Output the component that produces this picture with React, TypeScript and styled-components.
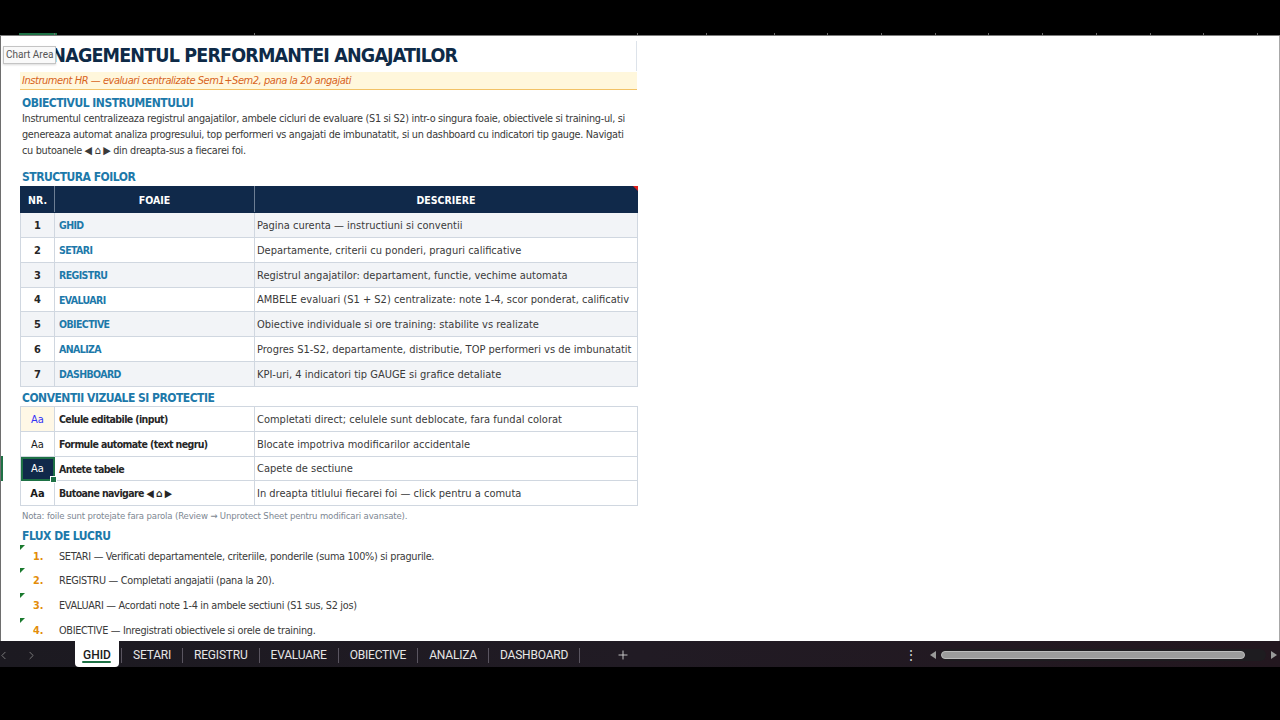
import React from "react";
import styled, { createGlobalStyle } from "styled-components";
import { ChevronLeft, ChevronRight, Plus } from "lucide-react";

const FONT = `"Liberation Sans Narrow", "Arial Narrow", "DejaVu Sans Condensed", Roboto, sans-serif`;
const UI = `Roboto, "Noto Sans", sans-serif`;

const GlobalStyle = createGlobalStyle`
  html, body { margin: 0; padding: 0; background: #000; overflow: hidden; }
  * { box-sizing: border-box; }
`;

const Screen = styled.div`
  width: 1280px;
  height: 720px;
  display: flex;
  flex-direction: column;
  background: #000;
`;

const TopBand = styled.div`
  height: 36px;
  flex: none;
  display: flex;
  align-items: flex-end;
`;

const Sheet = styled.div`
  height: 605px;
  flex: none;
  background: #fff;
  border-left: 1px solid #6e6e6e;
  border-right: 1px solid #a8a8a8;
  position: relative;
  overflow: hidden;
  font-family: ${FONT};
  color: #3a3a3a;
`;

const RowMark = styled.div<{ $top: number; $h: number }>`
  position: absolute;
  left: 0;
  top: ${(p) => p.$top}px;
  width: 2px;
  height: ${(p) => p.$h}px;
  background: #1e7145;
`;

const Content = styled.div`
  margin-left: 19px;
  width: 617px;
  display: flex;
  flex-direction: column;
`;

const TitleRow = styled.div`
  margin-top: 5px;
  height: 30px;
  line-height: 30px;
  padding-left: 2px;
  font-size: 19.5px;
  letter-spacing: -0.85px;
  font-weight: 700;
  color: #0e2a47;
  border-right: 1px solid #dde3ea;
  white-space: nowrap;
`;

const Tooltip = styled.div`
  position: absolute;
  left: 2px;
  top: 10px;
  height: 18px;
  padding: 0 2px;
  line-height: 16px;
  background: #f9f9f9;
  border: 1px solid #c4c4c4;
  box-shadow: 0 1px 2px rgba(0, 0, 0, 0.15);
  font-family: ${UI};
  font-size: 10px;
  color: #555;
  white-space: nowrap;
`;

const Subtitle = styled.div`
  margin-top: 1px;
  height: 18px;
  line-height: 17px;
  padding-left: 2px;
  background: #fff7dc;
  border-bottom: 1px solid #f2c266;
  font-size: 11px;
  letter-spacing: -0.45px;
  font-style: italic;
  color: #d8641c;
  white-space: nowrap;
`;

const SectionHead = styled.div<{ $mt: number; $h: number }>`
  margin-top: ${(p) => p.$mt}px;
  height: ${(p) => p.$h}px;
  line-height: ${(p) => p.$h}px;
  padding-left: 2px;
  font-size: 12px;
  letter-spacing: -0.5px;
  font-weight: 700;
  color: #1d79aa;
  white-space: nowrap;
`;

const Paragraph = styled.div`
  padding-left: 2px;
  font-size: 10.8px;
  letter-spacing: -0.3px;
  line-height: 16px;
  color: #3a3a3a;
`;

const Line = styled.div`
  height: 16px;
  white-space: nowrap;
`;

const Table = styled.table`
  border-collapse: collapse;
  table-layout: fixed;
  width: 617px;
  font-size: 11px;
`;

const Th = styled.th<{ $last?: boolean }>`
  height: 26px;
  padding: 0;
  background: #10294a;
  color: #fff;
  font-size: 10.5px;
  font-weight: 700;
  text-align: center;
  border: 1px solid #10294a;
  border-right: 1px solid ${(p) => (p.$last ? "#10294a" : "#6d7e94")};
  position: relative;
`;

const RedMark = styled.span`
  position: absolute;
  right: -1px;
  top: -1px;
  width: 0;
  height: 0;
  border-top: 5px solid #e0201b;
  border-left: 5px solid transparent;
`;

const Tr = styled.tr<{ $h: number; $alt?: boolean }>`
  height: ${(p) => p.$h}px;
  background: ${(p) => (p.$alt ? "#f2f4f7" : "#fff")};
`;

type CellKind = "num" | "name" | "desc" | "label" | "sample";

const Td = styled.td<{ $kind: CellKind; $bg?: string; $color?: string; $bold?: boolean; $selected?: boolean }>`
  padding: 0 ${(p) => (p.$kind === "desc" ? "2px" : p.$kind === "name" || p.$kind === "label" ? "4px" : "0")};
  border: 1px solid #d0d7e0;
  white-space: nowrap;
  overflow: visible;
  position: relative;
  text-align: ${(p) => (p.$kind === "num" || p.$kind === "sample" ? "center" : "left")};
  font-size: ${(p) => (p.$kind === "name" || p.$kind === "label" ? "10.5px" : "11px")};
  letter-spacing: ${(p) => (p.$kind === "name" || p.$kind === "label" ? "-0.6px" : "0")};
  font-weight: ${(p) => (p.$kind === "num" || p.$kind === "name" || p.$kind === "label" || p.$bold ? 700 : 400)};
  color: ${(p) =>
    p.$color ?? (p.$kind === "name" ? "#1d79aa" : p.$kind === "num" || p.$kind === "label" ? "#262626" : "#3a3a3a")};
  background: ${(p) => p.$bg ?? "transparent"};
  ${(p) =>
    p.$selected
      ? `outline: 2px solid #1e7145; outline-offset: -2px;
         &::after { content: ""; position: absolute; right: -3px; bottom: -3px; width: 5px; height: 5px;
           background: #1e7145; border: 1px solid #fff; }`
      : ""}
`;

const Note = styled.div`
  margin-top: 1px;
  height: 17px;
  line-height: 17px;
  padding-left: 2px;
  font-size: 9.5px;
  letter-spacing: -0.15px;
  color: #7d8792;
  white-space: nowrap;
`;

const FlowRow = styled.div<{ $h: number }>`
  height: ${(p) => p.$h}px;
  display: flex;
  align-items: center;
  position: relative;
  font-size: 10.8px;
  white-space: nowrap;
  &::before {
    content: "";
    position: absolute;
    left: 0;
    top: 0;
    width: 0;
    height: 0;
    border-top: 5px solid #1a7a2e;
    border-right: 5px solid transparent;
  }
`;

const FlowNum = styled.span`
  width: 39px;
  padding-left: 13px;
  font-weight: 700;
  color: #e38d0a;
`;

const FlowText = styled.span`
  color: #3a3a3a;
  letter-spacing: -0.3px;
`;

const TabBar = styled.div`
  height: 26px;
  flex: none;
  display: flex;
  align-items: stretch;
  background: linear-gradient(90deg, #1c1a21 0%, #211b24 50%, #23171f 100%);
  font-family: ${UI};
  font-size: 12px;
  color: #e6e6e6;
`;

const NavArrows = styled.div`
  width: 75px;
  display: flex;
  align-items: center;
  gap: 15px;
  color: #8d8d8d;
  padding-top: 2px;
`;

const ActiveTab = styled.div`
  width: 44px;
  margin-right: 2px;
  padding-top: 2px;
  background: #fff;
  border-radius: 0 0 4px 4px;
  color: #1b1b1b;
  font-weight: 500;
  display: flex;
  align-items: center;
  justify-content: center;
  position: relative;
  &::after {
    content: "";
    position: absolute;
    left: 7px;
    right: 8px;
    bottom: 4px;
    height: 2px;
    background: #1e7145;
    border-radius: 1px;
  }
`;

const Sep = styled.div`
  width: 1px;
  align-self: center;
  height: 15px;
  margin-top: 2px;
  background: #5a5560;
`;

const Tab = styled.div`
  padding: 2px 11px 0;
  display: flex;
  align-items: center;
  letter-spacing: -0.2px;
`;

const AddTab = styled.div`
  width: 86px;
  padding-top: 2px;
  display: flex;
  align-items: center;
  justify-content: center;
  color: #d8d8d8;
`;

const Spacer = styled.div`
  flex: 1;
`;

const Kebab = styled.div`
  width: 12px;
  margin-right: 8px;
  padding-top: 2px;
  display: flex;
  align-items: center;
  justify-content: center;
  color: #d0d0d0;
  font-size: 14px;
`;

const ScrollArea = styled.div`
  width: 355px;
  display: flex;
  align-items: center;
  padding: 2px 3px 0 5px;
  gap: 5px;
`;

const Arrow = styled.div<{ $dir: "l" | "r" }>`
  width: 0;
  height: 0;
  border-top: 4px solid transparent;
  border-bottom: 4px solid transparent;
  ${(p) => (p.$dir === "l" ? "border-right: 6px solid #9a9a9a;" : "border-left: 6px solid #9a9a9a;")}
`;

const Track = styled.div`
  flex: 1;
  height: 12px;
  display: flex;
  align-items: center;
  padding-right: 21px;
  background: #1e1c20;
  border-radius: 6px;
`;

const Thumb = styled.div`
  flex: 1;
  height: 8px;
  border-radius: 4px;
  background: #9b9b9b;
  border: 1px solid #bdbdbd;
`;

const BottomBlack = styled.div`
  flex: 1;
  background: #000;
`;

const structure = [
  ["1", "GHID", "Pagina curenta — instructiuni si conventii"],
  ["2", "SETARI", "Departamente, criterii cu ponderi, praguri calificative"],
  ["3", "REGISTRU", "Registrul angajatilor: departament, functie, vechime automata"],
  ["4", "EVALUARI", "AMBELE evaluari (S1 + S2) centralizate: note 1-4, scor ponderat, calificativ"],
  ["5", "OBIECTIVE", "Obiective individuale si ore training: stabilite vs realizate"],
  ["6", "ANALIZA", "Progres S1-S2, departamente, distributie, TOP performeri vs de imbunatatit"],
  ["7", "DASHBOARD", "KPI-uri, 4 indicatori tip GAUGE si grafice detaliate"],
];
const structHeights = [25, 25, 25, 24, 25, 25, 25];

const flows = [
  ["1.", "SETARI — Verificati departamentele, criteriile, ponderile (suma 100%) si pragurile.", 23],
  ["2.", "REGISTRU — Completati angajatii (pana la 20).", 25],
  ["3.", "EVALUARI — Acordati note 1-4 in ambele sectiuni (S1 sus, S2 jos)", 25],
  ["4.", "OBIECTIVE — Inregistrati obiectivele si orele de training.", 24],
] as const;

const tickXs = [54, 254, 637, 706, 774, 827, 881, 935, 988, 1042, 1096, 1150, 1203, 1257];

export default function App() {
  return (
    <>
      <GlobalStyle />
      <Screen>
        <TopBand>
          <svg width="1280" height="4" viewBox="0 0 1280 4">
            <rect x="0" y="3" width="1280" height="1" fill="#7b7b7b" />
            <rect x="19" y="1" width="38" height="2" fill="#1e7145" />
            {tickXs.map((x) => (
              <rect key={x} x={x} y="1" width="1" height="2" fill="#6a6a6a" />
            ))}
          </svg>
        </TopBand>
        <Sheet>
          <RowMark $top={420} $h={25} />
          <Content>
            <TitleRow>MANAGEMENTUL PERFORMANTEI ANGAJATILOR</TitleRow>
            <Subtitle>Instrument HR — evaluari centralizate Sem1+Sem2, pana la 20 angajati</Subtitle>
            <SectionHead $mt={5} $h={16}>OBIECTIVUL INSTRUMENTULUI</SectionHead>
            <Paragraph>
              <Line>
                Instrumentul centralizeaza registrul angajatilor, ambele cicluri de evaluare (S1 si S2) intr-o singura foaie, obiectivele si training-ul, si
              </Line>
              <Line>
                genereaza automat analiza progresului, top performeri vs angajati de imbunatatit, si un dashboard cu indicatori tip gauge. Navigati
              </Line>
              <Line>cu butoanele ◀ ⌂ ▶ din dreapta-sus a fiecarei foi.</Line>
            </Paragraph>
            <SectionHead $mt={10} $h={17}>STRUCTURA FOILOR</SectionHead>
            <Table>
              <colgroup>
                <col style={{ width: 34 }} />
                <col style={{ width: 200 }} />
                <col style={{ width: 383 }} />
              </colgroup>
              <thead>
                <tr>
                  <Th>NR.</Th>
                  <Th>FOAIE</Th>
                  <Th $last>
                    DESCRIERE
                    <RedMark />
                  </Th>
                </tr>
              </thead>
              <tbody>
                {structure.map(([n, name, desc], i) => (
                  <Tr key={n} $h={structHeights[i]} $alt={i % 2 === 0}>
                    <Td $kind="num">{n}</Td>
                    <Td $kind="name">{name}</Td>
                    <Td $kind="desc">{desc}</Td>
                  </Tr>
                ))}
              </tbody>
            </Table>
            <SectionHead $mt={3} $h={16}>CONVENTII VIZUALE SI PROTECTIE</SectionHead>
            <Table>
              <colgroup>
                <col style={{ width: 34 }} />
                <col style={{ width: 200 }} />
                <col style={{ width: 383 }} />
              </colgroup>
              <tbody>
                <Tr $h={25}>
                  <Td $kind="sample" $bg="#fff8e6" $color="#3434f5">Aa</Td>
                  <Td $kind="label">Celule editabile (input)</Td>
                  <Td $kind="desc">Completati direct; celulele sunt deblocate, fara fundal colorat</Td>
                </Tr>
                <Tr $h={25}>
                  <Td $kind="sample" $color="#1a1a1a">Aa</Td>
                  <Td $kind="label">Formule automate (text negru)</Td>
                  <Td $kind="desc">Blocate impotriva modificarilor accidentale</Td>
                </Tr>
                <Tr $h={24}>
                  <Td $kind="sample" $bg="#10294a" $color="#fff" $selected>Aa</Td>
                  <Td $kind="label">Antete tabele</Td>
                  <Td $kind="desc">Capete de sectiune</Td>
                </Tr>
                <Tr $h={25}>
                  <Td $kind="sample" $color="#1a1a1a" $bold>Aa</Td>
                  <Td $kind="label">Butoane navigare ◀ ⌂ ▶</Td>
                  <Td $kind="desc">In dreapta titlului fiecarei foi — click pentru a comuta</Td>
                </Tr>
              </tbody>
            </Table>
            <Note>Nota: foile sunt protejate fara parola (Review → Unprotect Sheet pentru modificari avansate).</Note>
            <SectionHead $mt={3} $h={18}>FLUX DE LUCRU</SectionHead>
            {flows.map(([n, t, h]) => (
              <FlowRow key={n} $h={h}>
                <FlowNum>{n}</FlowNum>
                <FlowText>{t}</FlowText>
              </FlowRow>
            ))}
          </Content>
          <Tooltip>Chart Area</Tooltip>
        </Sheet>
        <TabBar>
          <NavArrows>
            <ChevronLeft size={13} strokeWidth={1.5} style={{ marginLeft: -3 }} />
            <ChevronRight size={13} strokeWidth={1.5} />
          </NavArrows>
          <ActiveTab>GHID</ActiveTab>
          <Sep />
          <Tab>SETARI</Tab>
          <Sep />
          <Tab>REGISTRU</Tab>
          <Sep />
          <Tab>EVALUARE</Tab>
          <Sep />
          <Tab>OBIECTIVE</Tab>
          <Sep />
          <Tab>ANALIZA</Tab>
          <Sep />
          <Tab>DASHBOARD</Tab>
          <Sep />
          <AddTab>
            <Plus size={14} strokeWidth={1.5} />
          </AddTab>
          <Spacer />
          <Kebab>⋮</Kebab>
          <ScrollArea>
            <Arrow $dir="l" />
            <Track>
              <Thumb />
            </Track>
            <Arrow $dir="r" />
          </ScrollArea>
        </TabBar>
        <BottomBlack />
      </Screen>
    </>
  );
}
